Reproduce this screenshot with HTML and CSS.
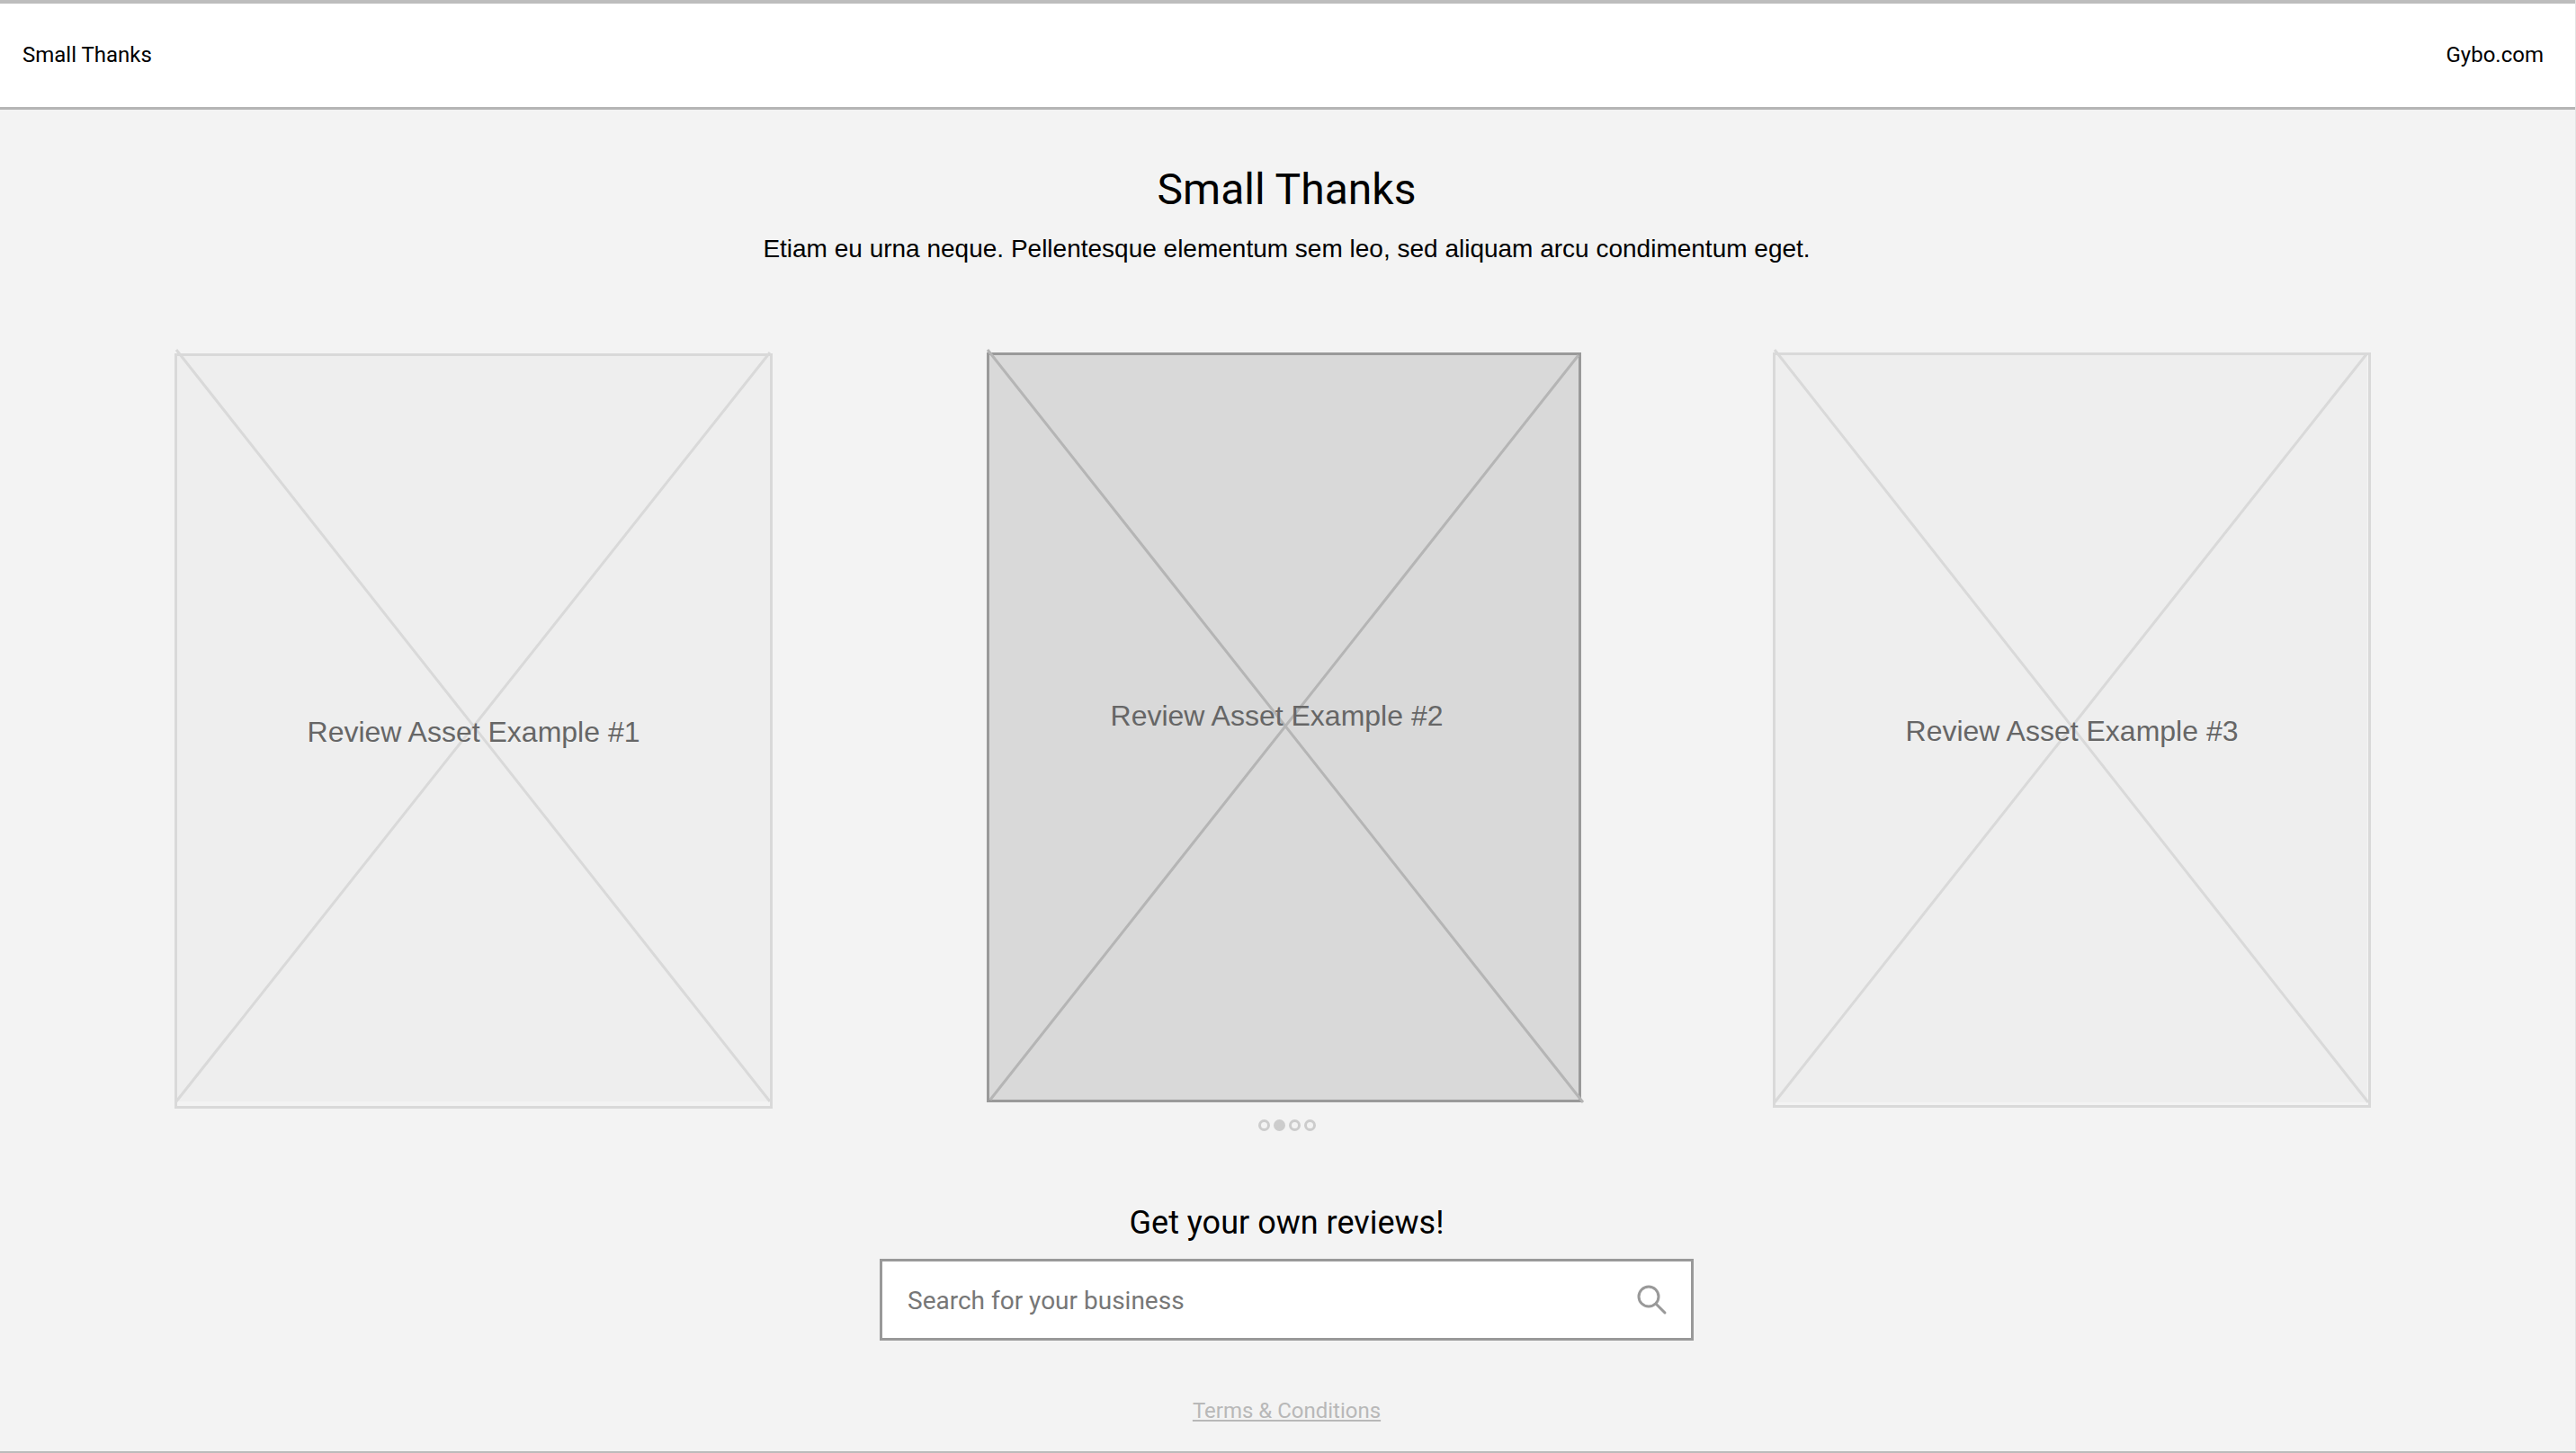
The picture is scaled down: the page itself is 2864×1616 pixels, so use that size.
FILE: index.html
```html
<!DOCTYPE html>
<html lang="en">
<head>
  <meta charset="utf-8">
  <meta name="viewport" content="width=device-width, initial-scale=1">
  <title>Small Thanks</title>
  <link rel="stylesheet" href="styles.css">
</head>
<body>
  <div class="page">
    <header class="topbar">
      <a class="topbar-link" href="#">Small Thanks</a>
      <a class="topbar-link" href="#">Gybo.com</a>
    </header>

    <main class="content">
      <section class="intro">
        <h1 class="title">Small Thanks</h1>
        <p class="subtitle">Etiam eu urna neque. Pellentesque elementum sem leo, sed aliquam arcu condimentum eget.</p>
      </section>

      <section class="carousel" aria-label="Review examples">
        <article class="slide slide-first">
          <svg class="cross" viewBox="0 0 665 840" preserveAspectRatio="none" aria-hidden="true">
            <rect x="3" y="3" width="659" height="829"/>
            <path d="M2 -4L662 832M662 -1L2 832"/>
          </svg>
          <p class="slide-label">Review Asset Example #1</p>
        </article>
        <article class="slide slide-active">
          <svg class="cross" viewBox="0 0 661 834" preserveAspectRatio="none" aria-hidden="true">
            <rect x="3" y="3" width="655" height="828"/>
            <path d="M1 -3L663 834M658 3L4 831"/>
          </svg>
          <p class="slide-label">Review Asset Example #2</p>
        </article>
        <article class="slide slide-last">
          <svg class="cross" viewBox="0 0 665 840" preserveAspectRatio="none" aria-hidden="true">
            <rect x="3" y="3" width="658" height="831"/>
            <path d="M2 -3L662 834M660 2L2 834"/>
          </svg>
          <p class="slide-label">Review Asset Example #3</p>
        </article>
      </section>

      <nav class="dots" aria-label="Choose an example">
        <button class="dot" type="button" aria-label="Example 1"></button>
        <button class="dot dot-current" type="button" aria-label="Example 2" aria-current="true"></button>
        <button class="dot" type="button" aria-label="Example 3"></button>
        <button class="dot" type="button" aria-label="Example 4"></button>
      </nav>

      <form class="search">
        <label class="search-title" for="business">Get your own reviews!</label>
        <div class="search-box">
          <input class="search-input" id="business" type="text" placeholder="Search for your business">
          <button class="search-button" type="submit" aria-label="Search">
            <svg class="search-icon" viewBox="0 0 34 34" aria-hidden="true">
              <circle cx="13" cy="13" r="11"/>
              <path d="M21 21L31 31"/>
            </svg>
          </button>
        </div>
      </form>
    </main>

    <footer class="footer">
      <a class="terms" href="#">Terms &amp; Conditions</a>
    </footer>
  </div>
</body>
</html>
```
FILE: styles.css
```css
* {
  box-sizing: border-box;
}

body {
  margin: 0;
  background: #f3f3f3;
  color: #000;
  font-family: Roboto, "Liberation Sans", sans-serif;
}

h1,
p {
  margin: 0;
  font-weight: 400;
}

.page {
  display: flex;
  flex-direction: column;
  min-height: 100vh;
  border-right: 1px solid #e3e3e3;
  border-bottom: 2px solid #bbb;
}

.topbar {
  display: flex;
  align-items: center;
  justify-content: space-between;
  padding: 41px 35px 42px 25px;
  border-top: 4px solid #bdbdbd;
  border-bottom: 3px solid #b5b5b5;
  background: #fff;
}

.topbar-link {
  color: #000;
  font-size: 24px;
  line-height: 32px;
  text-decoration: none;
}

.intro {
  padding: 57px 26px 0 24px;
  text-align: center;
}

.title {
  font-size: 48px;
  line-height: 64px;
}

.subtitle {
  padding-top: 18px;
  font-family: "Liberation Sans", Arial, sans-serif;
  font-size: 28px;
  line-height: 32px;
}

.carousel {
  display: grid;
  grid-template-columns: 194fr 665fr 238fr 661fr 213fr 665fr 227fr;
  align-items: start;
  padding-top: 99px;
}

.slide {
  position: relative;
  display: flex;
  align-items: center;
  justify-content: center;
  border: 3px solid #d9d9d9;
  aspect-ratio: 665 / 840;
  font-family: "Liberation Sans", Arial, sans-serif;
  color: #666;
}

.slide-first {
  grid-column: 2;
  margin-top: 1px;
}

.slide-active {
  grid-column: 4;
  padding: 0 16px 28px 0;
  border-color: #999;
  aspect-ratio: 661 / 834;
}

.slide-last {
  grid-column: 6;
}

.cross {
  position: absolute;
  inset: -3px;
  width: calc(100% + 6px);
  height: calc(100% + 6px);
  overflow: visible;
  fill: #eee;
  stroke: #d9d9d9;
  stroke-width: 3px;
}

.cross rect {
  stroke: none;
}

.slide-active .cross {
  fill: #d9d9d9;
  stroke: #b5b5b5;
}

.slide-label {
  position: relative;
  padding-top: 1px;
  font-size: 32px;
  line-height: 36px;
}

.dots {
  display: flex;
  justify-content: center;
  gap: 4px;
  padding: 12px 26px 0 24px;
}

.dot {
  width: 13px;
  height: 13px;
  padding: 0;
  border: 3px solid #ccc;
  border-radius: 50%;
  background: transparent;
}

.dot-current {
  background: #ccc;
}

.search {
  display: flex;
  flex-direction: column;
  align-items: center;
  padding: 78px 26px 0 24px;
}

.search-title {
  font-size: 36px;
  line-height: 48px;
}

.search-box {
  display: flex;
  align-items: center;
  width: 100%;
  max-width: 905px;
  margin-top: 16px;
  padding: 0 26px 0 28px;
  border: 3px solid #999;
  background: #fff;
}

.search-input {
  flex: 1;
  min-width: 0;
  height: 85px;
  padding: 2px 0 0;
  border: 0;
  outline: 0;
  background: transparent;
  font: 28px Roboto, "Liberation Sans", sans-serif;
}

.search-input::placeholder {
  color: #777;
  opacity: 1;
}

.search-button {
  display: flex;
  padding: 0;
  border: 0;
  background: transparent;
}

.search-icon {
  width: 34px;
  height: 34px;
  fill: none;
  stroke: #999;
  stroke-width: 3px;
  stroke-linecap: round;
}

.footer {
  padding: 62px 26px 24px 24px;
  text-align: center;
}

.terms {
  color: #b8b8b8;
  font-size: 24px;
  line-height: 32px;
}
```
